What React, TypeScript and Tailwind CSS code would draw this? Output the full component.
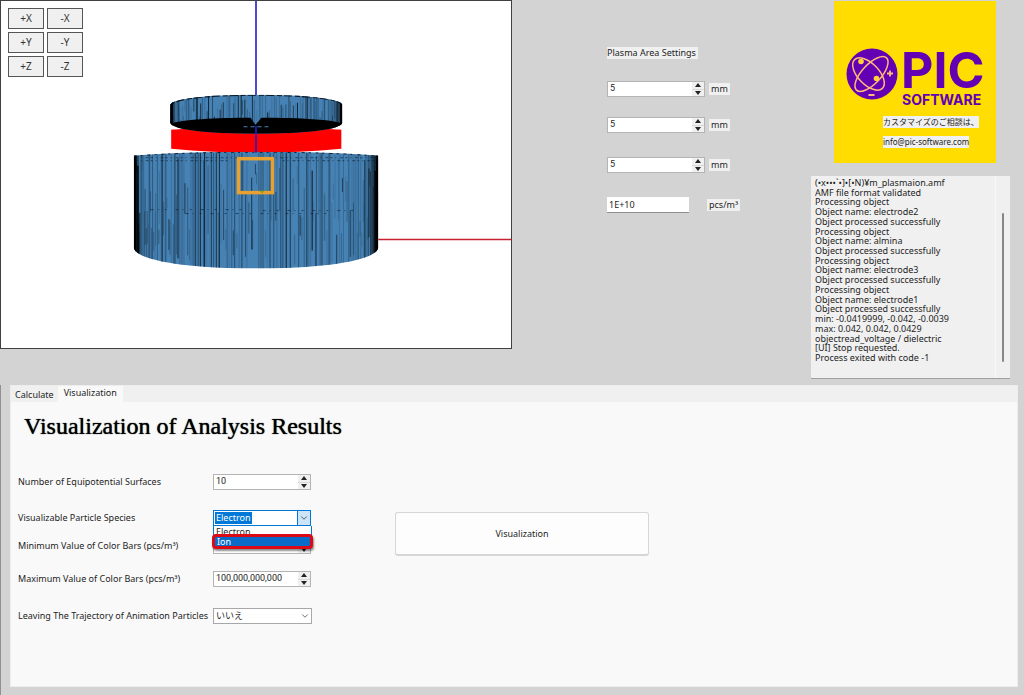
import { useState } from 'react';
import type { ReactNode } from 'react';
import { ChevronDown } from 'lucide-react';

const LOG_LINES = [
  '(•x•••`•]•[•N)¥m_plasmaion.amf',
  'AMF file format validated',
  'Processing object',
  'Object name: electrode2',
  'Object processed successfully',
  'Processing object',
  'Object name: almina',
  'Object processed successfully',
  'Processing object',
  'Object name: electrode3',
  'Object processed successfully',
  'Processing object',
  'Object name: electrode1',
  'Object processed successfully',
  'min: -0.0419999, -0.042, -0.0039',
  'max: 0.042, 0.042, 0.0429',
  'objectread_voltage / dielectric',
  '[UI] Stop requested.',
  'Process exited with code -1',
];

const VIEWS = ['+X', '-X', '+Y', '-Y', '+Z', '-Z'];

// Small seeded generator so the mesh looks the same on every render
function createRandom(seed: number) {
  let s = seed;
  return () => {
    s = (s * 16807) % 2147483647;
    return s / 2147483647;
  };
}

interface MeshLine {
  x: number;
  y1: number;
  y2: number;
  opacity: number;
}

function meshLines(count: number, cx: number, r: number, top: number, bottom: number, seed: number): MeshLine[] {
  const rnd = createRandom(seed);
  return Array.from({ length: count }, (_, i) => {
    const angle = ((i + rnd() * 0.8) / count - 0.5) * Math.PI;
    const full = rnd() > 0.5;
    const a = top + rnd() * (bottom - top) * 0.7;
    return {
      x: cx + r * Math.sin(angle),
      y1: full ? top : a,
      y2: full ? bottom : a + 10 + rnd() * (bottom - a),
      opacity: 0.1 + rnd() * rnd() * 0.8,
    };
  });
}

const BODY_LINES = meshLines(190, 256, 122, 152, 270, 77);
const DISC_LINES = meshLines(110, 256, 86, 94, 132, 1234);

function Model() {
  return (
    <svg className="block w-full" viewBox="0 0 511 348" aria-label="3D model" role="img">
      <defs>
        <clipPath id="body">
          <path d="M133 155 Q180 151 255.500 151 Q331 151 378 155 V247 C376 260 325 268 255.500 268 C186 268 135 260 133 247Z" />
        </clipPath>
        <clipPath id="disc">
          <path d="M169.500 104 C172 98 205 94 255.500 94 C306 94 340 98 342 104 V122 C340 129 306 133 255.500 133 C205 133 172 129 169.500 122Z" />
        </clipPath>
      </defs>
      <path d="M255.500 0V96" stroke="#1e1ec8" strokeWidth="1.600" />
      <path d="M378 239H511" stroke="#c8202c" strokeWidth="1.600" />
      <path d="M170.500 129 C190 127 320 127 341 129 V148 Q300 152 256 152 Q212 152 170.500 148Z" fill="#ff0000" />
      <g clipPath="url(#body)">
        <path d="M133 150H378V270H133Z" fill="#4682b4" />
        {BODY_LINES.map((l, i) => (
          <path key={i} d={`M${l.x} ${l.y1}V${l.y2}`} stroke="#000000" strokeWidth="1" opacity={l.opacity} />
        ))}
        <path d="M134 154V262M377.500 154V262" stroke="#000000" strokeWidth="4" />
        <path d="M137 165V254M375 170V258" stroke="#000000" strokeWidth="2" opacity="0.8" />
        <path d="M135 157H378M135 160H230M282 160H378" stroke="#0b1c2c" strokeWidth="1" strokeDasharray="2 3 1 4 3 2" opacity="0.6" />
        <path d="M150 209H250M262 210H360M185 213H330" stroke="#0b1c2c" strokeWidth="1" strokeDasharray="3 4 1 6 2 9" opacity="0.6" />
        <path d="M133 155 Q180 151 255.500 151 Q331 151 378 155" fill="none" stroke="#10202e" strokeWidth="2" strokeDasharray="3 4 2 5" />
      </g>
      <g clipPath="url(#disc)">
        <path d="M169 93H342V134H169Z" fill="#4682b4" />
        {DISC_LINES.map((l, i) => (
          <path key={i} d={`M${l.x} ${l.y1}V${l.y2}`} stroke="#000000" strokeWidth="1" opacity={l.opacity} />
        ))}
        <path d="M169 123 C180 119 215 117 250 117 L255 124 L261 117 C300 117 334 119 342 123 V134H169Z" fill="#000000" />
        <path d="M170 104 C172 98 205 94 255.500 94 C306 94 340 98 342 104" fill="none" stroke="#0a141d" strokeWidth="2" strokeDasharray="5 2 8 3" />
        <path d="M171 100V125M341 100V125" stroke="#000000" strokeWidth="3" />
        <path d="M243 126H268" stroke="#4682b4" strokeWidth="1" strokeDasharray="4 3" />
      </g>
      <path d="M255.500 125V152" stroke="#1e1ec8" strokeWidth="1.600" />
      <rect x="238" y="158" width="34" height="34" fill="none" stroke="#e8a030" strokeWidth="3.500" />
      <path d="M259 190L262 192L264 189" stroke="#5a9a20" strokeWidth="1" fill="none" />
    </svg>
  );
}

function Logo() {
  return (
    <div className="flex items-start gap-1 text-[#6300b4]">
      <svg className="h-[52px] w-[52px] shrink-0" viewBox="0 0 52 52" aria-hidden="true">
        <circle cx="26" cy="26" r="25.500" fill="#6300b4" />
        <g fill="none" stroke="#ffb878" strokeWidth="1.500">
          <ellipse cx="22.500" cy="26" rx="20" ry="10.500" transform="rotate(46 22.500 26)" />
          <ellipse cx="25.500" cy="26" rx="22" ry="9.500" transform="rotate(-47 25.500 26)" />
          <path d="M22.500 47H28.500M44 22.500V28.500M41 25.500H47" strokeWidth="1.800" />
        </g>
        <circle cx="15" cy="13.500" r="2.800" fill="#ffd23a" />
        <circle cx="30.500" cy="30.500" r="2.800" fill="#ffd23a" />
      </svg>
      <div className="flex flex-col items-start font-['Inter',sans-serif]">
        <span className="-ml-px text-[50px] leading-[44px] font-bold">PIC</span>
        <span className="text-[14px] leading-4 font-bold">SOFTWARE</span>
      </div>
    </div>
  );
}

interface SpinnerProps {
  label: string;
  defaultValue: string;
}

function Spinner({ label, defaultValue }: SpinnerProps) {
  return (
    <div className="flex h-4 w-[98px] border border-[#b4b4b4] bg-white">
      <input
        type="text"
        inputMode="numeric"
        aria-label={label}
        defaultValue={defaultValue}
        className="h-3 min-w-0 flex-1 px-0.5 font-['Roboto',sans-serif] leading-3 outline-none"
      />
      <div className="flex w-3 flex-col gap-px bg-[#f0f0f0]">
        <button type="button" aria-label={`${label} up`} className="flex flex-1 items-center justify-center">
          <svg className="h-1 w-1.5" viewBox="0 0 6 4"><path d="M3 0L6 4H0Z" fill="#222222" /></svg>
        </button>
        <button type="button" aria-label={`${label} down`} className="flex flex-1 items-center justify-center border-t border-[#d8d8d8]">
          <svg className="h-1 w-1.5" viewBox="0 0 6 4"><path d="M0 0H6L3 4Z" fill="#222222" /></svg>
        </button>
      </div>
    </div>
  );
}

function Tag({ children }: { children: ReactNode }) {
  return <span className="bg-[#f0f0f0] px-0.5 leading-3">{children}</span>;
}

function PlasmaSettings() {
  return (
    <section className="flex flex-1 flex-col items-start pt-[47px] pl-[95px]">
      <h2 className="bg-[#f0f0f0] pr-0.5 leading-3">Plasma Area Settings</h2>
      <div className="mt-[22px] flex items-center gap-1">
        <Spinner label="Plasma area X" defaultValue="5" />
        <Tag>mm</Tag>
      </div>
      <div className="mt-5 flex items-center gap-1">
        <Spinner label="Plasma area Y" defaultValue="5" />
        <Tag>mm</Tag>
      </div>
      <div className="mt-6 flex items-center gap-1">
        <Spinner label="Plasma area Z" defaultValue="5" />
        <Tag>mm</Tag>
      </div>
      <div className="mt-6 flex items-center gap-[18px]">
        <input
          type="text"
          aria-label="Plasma density"
          defaultValue="1E+10"
          className="h-4 w-[82px] border-b border-[#909090] bg-white px-0.5 leading-3 outline-none"
        />
        <Tag>pcs/m³</Tag>
      </div>
    </section>
  );
}

function LogPanel() {
  return (
    <div role="log" className="flex h-[203px] border-b border-[#a0a0a0] bg-[#f0f0f0]">
      <ul className="flex h-[186px] flex-1 flex-col justify-between pt-0.5 pl-1">
        {LOG_LINES.map((line, i) => (
          <li key={i} className="leading-[9px] whitespace-nowrap">{line}</li>
        ))}
      </ul>
      <div className="flex w-[15px] justify-center border-l border-[#f8f8f8] pt-[37px] pb-4">
        <div className="w-0.5 rounded bg-[#868686]" />
      </div>
    </div>
  );
}

function SpeciesSelect() {
  const [species, setSpecies] = useState('Electron');
  return (
    <div className="relative w-[98px]">
      <div className="flex h-4 border border-[#0078d7] bg-white">
        <select
          id="species"
          value={species}
          onChange={(e) => setSpecies(e.target.value)}
          className="min-w-0 flex-1 appearance-none bg-[linear-gradient(#0078d7,#0078d7)] bg-[length:37px_12px] bg-[position:1px_1px] bg-no-repeat px-0.5 leading-3 text-white outline-none"
        >
          <option>Electron</option>
          <option>Ion</option>
        </select>
        <span className="flex w-[13px] items-center justify-center border-l border-[#0078d7] bg-[#cce4f7]">
          <ChevronDown className="h-2.5 w-2.5 text-[#444444]" strokeWidth={2} />
        </span>
      </div>
      <ul role="listbox" aria-label="Particle species" className="absolute top-4 -left-px z-10 w-[101px]">
        <li role="option" aria-selected={false} className="mx-px border-x border-[#0078d7] bg-white px-0.5 leading-3">
          Electron
        </li>
        <li
          role="option"
          aria-selected
          className="relative -mt-1 h-[15px] rounded border-3 border-[#dc0a14] bg-[#0a6cc8] px-0.5 leading-[9px] text-white shadow-[1px_2px_2px_#00000070]"
        >
          Ion
        </li>
      </ul>
    </div>
  );
}

function FormRow({ label, htmlFor, children }: { label: string; htmlFor?: string; children: ReactNode }) {
  return (
    <div className="flex h-4 items-center">
      <label htmlFor={htmlFor} className="w-[195px] shrink-0 whitespace-nowrap">{label}</label>
      {children}
    </div>
  );
}

function VisualizationPanel() {
  return (
    <div className="flex-1 bg-[#f9f9f9] pl-[7px]">
      <h1 className="pt-2 pl-1.5 font-['Liberation_Serif',serif] text-[24px] leading-8 text-black [text-shadow:0_0_1px_#000000]">
        Visualization of Analysis Results
      </h1>
      <div className="mt-8 flex items-start">
        <div className="flex w-[377px] flex-col">
          <FormRow label="Number of Equipotential Surfaces">
            <Spinner label="Number of Equipotential Surfaces" defaultValue="10" />
          </FormRow>
          <div className="h-5" />
          <FormRow label="Visualizable Particle Species" htmlFor="species">
            <SpeciesSelect />
          </FormRow>
          <div className="h-3" />
          <FormRow label="Minimum Value of Color Bars (pcs/m³)">
            <Spinner label="Minimum Value of Color Bars" defaultValue="" />
          </FormRow>
          <div className="h-[17px]" />
          <FormRow label="Maximum Value of Color Bars (pcs/m³)">
            <Spinner label="Maximum Value of Color Bars" defaultValue="100,000,000,000" />
          </FormRow>
          <div className="h-[21px]" />
          <FormRow label="Leaving The Trajectory of Animation Particles" htmlFor="trajectory">
            <div className="relative w-[99px]">
              <select id="trajectory" className="block h-4 w-full appearance-none border border-[#a8a8a8] bg-white px-0.5 leading-3">
                <option>いいえ</option>
                <option>はい</option>
              </select>
              <ChevronDown className="pointer-events-none absolute top-[3px] right-0.5 h-2.5 w-2.5 text-[#555555]" />
            </div>
          </FormRow>
        </div>
        <button
          type="button"
          className="mt-[38px] h-11 w-[254px] rounded-[3px] border border-b-2 border-[#d6d6d6] bg-[#fdfdfd]"
        >
          Visualization
        </button>
      </div>
    </div>
  );
}

export default function App() {
  return (
    <div className="flex min-h-screen flex-col bg-[#d3d3d3] font-['Noto_Sans','Noto_Sans_CJK_JP',sans-serif] text-[9px] text-[#1e1e1e]">
      <div className="flex h-[385px] items-start">
        <div className="relative w-1/2 border border-[#404040] bg-white">
          <Model />
          <div className="absolute top-[7px] left-[7px] grid grid-cols-2 gap-[3px]">
            {VIEWS.map((view) => (
              <button
                key={view}
                type="button"
                className="h-[21px] w-9 border border-[#555555] bg-[#f0f0f0] text-[10px] text-[#333333]"
              >
                {view}
              </button>
            ))}
          </div>
        </div>
        <PlasmaSettings />
        <aside className="flex w-[213px] shrink-0 flex-col pr-3.5">
          <div className="mt-px ml-[23px] flex h-[162px] w-[162px] flex-col items-start bg-[#ffdd00] pt-[47px] pl-3">
            <Logo />
            <div className="mt-2 ml-[37px] flex flex-col items-start gap-2">
              <p className="bg-[#f0f0f0] text-[8px] leading-3 whitespace-nowrap">カスタマイズのご相談は、</p>
              <a href="mailto:info@pic-software.com" className="bg-[#f0f0f0] text-[8px] leading-3">
                info@pic-software.com
              </a>
            </div>
          </div>
          <div className="mt-[13px]">
            <LogPanel />
          </div>
        </aside>
      </div>

      <div className="flex flex-1 flex-col border-l border-[#909090] pr-1.5 pb-2 pl-[9px]">
        <div className="flex flex-1 flex-col border border-[#ededed] bg-[#f0f0f0]">
          <div role="tablist" className="flex h-4 items-end">
            <button type="button" role="tab" aria-selected={false} className="h-[15px] px-1">Calculate</button>
            <button type="button" role="tab" aria-selected className="h-4 bg-[#f9f9f9] px-1.5 pb-0.5">Visualization</button>
          </div>
          <VisualizationPanel />
        </div>
      </div>
    </div>
  );
}
